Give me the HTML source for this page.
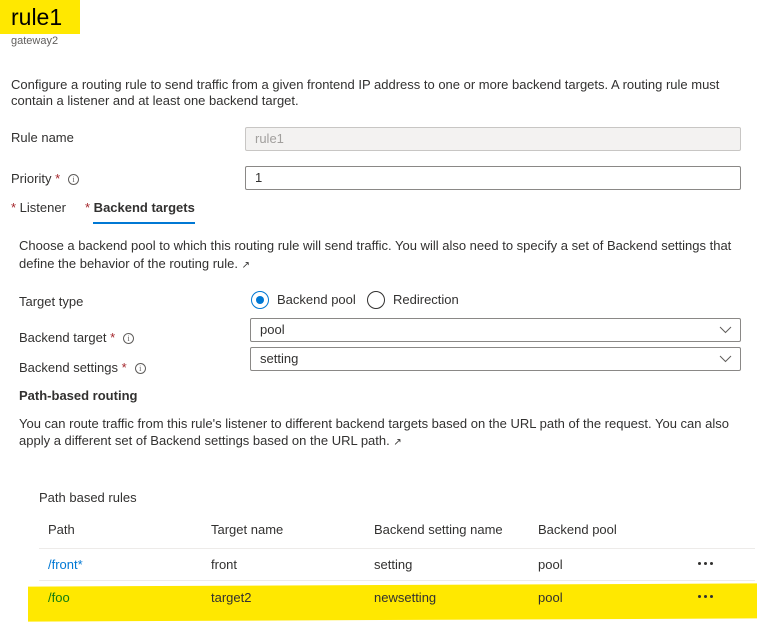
<!DOCTYPE html>
<html><head><meta charset="utf-8"><style>
*{margin:0;padding:0;box-sizing:border-box}
body{width:772px;height:629px;background:#fff;position:relative;overflow:hidden;font-family:"Liberation Sans",sans-serif;font-size:13px;color:#323130}
.t{position:absolute;white-space:nowrap;line-height:16px}
.req{color:#a4262c}
.info{display:inline-block;width:11px;height:11px;border:1px solid #605e5c;border-radius:50%;font-size:8px;line-height:9px;text-align:center;color:#605e5c;vertical-align:middle;margin-left:8px;font-family:"Liberation Serif",serif}
.box{position:absolute;border:1px solid #8a8886;border-radius:2px;height:24px;padding-left:9px;line-height:22px;font-size:13px}
.chev{position:absolute;right:8px;top:7px}
.hl{position:absolute;background:#ffe800}
.line{position:absolute;height:1px;background:#edebe9}
.ext{font-size:10px}
.dots{position:absolute;width:18px;height:4px}
.dots i{position:absolute;top:0;width:3px;height:3px;border-radius:50%;background:#323130}
</style></head><body>
<div class="hl" style="left:0;top:0;width:80px;height:34px"></div>
<div class="hl" style="left:28px;top:585px;width:729px;height:35px;transform:skewY(-0.25deg)"></div>
<div class="t" style="left:11px;top:3px;font-size:23px;line-height:28px;color:#000">rule1</div>
<div class="t" style="left:11px;top:33px;font-size:11px;color:#605e5c">gateway2</div>
<div class="t" style="left:11px;top:77px">Configure a routing rule to send traffic from a given frontend IP address to one or more backend targets. A routing rule must</div>
<div class="t" style="left:11px;top:93px">contain a listener and at least one backend target.</div>
<div class="t" style="left:11px;top:130px">Rule name</div>
<div class="box" style="left:245px;top:127px;width:496px;background:#f3f2f1;border-color:#c8c6c4;color:#a19f9d">rule1</div>
<div class="t" style="left:11px;top:171px">Priority <span class="req">*</span><span class="info">i</span></div>
<div class="box" style="left:245px;top:166px;width:496px">1</div>
<div class="t" style="left:11px;top:200px"><span class="req">*</span> Listener</div>
<div class="t" style="left:85px;top:200px;font-weight:bold"><span class="req" style="font-weight:normal">*</span> Backend targets</div>
<div style="position:absolute;left:93px;top:222px;width:102px;height:2px;background:#0078d4"></div>
<div class="t" style="left:19px;top:238px">Choose a backend pool to which this routing rule will send traffic. You will also need to specify a set of Backend settings that</div>
<div class="t" style="left:19px;top:256px">define the behavior of the routing rule. <span class="ext">&#x2197;</span></div>
<div class="t" style="left:19px;top:294px">Target type</div>
<div style="position:absolute;left:251px;top:291px;width:18px;height:18px;border:1px solid #0078d4;border-radius:50%"><div style="position:absolute;left:4px;top:4px;width:8px;height:8px;border-radius:50%;background:#0078d4"></div></div>
<div class="t" style="left:277px;top:292px">Backend pool</div>
<div style="position:absolute;left:367px;top:291px;width:18px;height:18px;border:1px solid #323130;border-radius:50%"></div>
<div class="t" style="left:393px;top:292px">Redirection</div>
<div class="t" style="left:19px;top:330px">Backend target <span class="req">*</span><span class="info">i</span></div>
<div class="box" style="left:250px;top:318px;width:491px">pool<svg class="chev" width="13" height="8" viewBox="0 0 13 8"><path d="M1 1l5.5 5.5L12 1" fill="none" stroke="#605e5c" stroke-width="1"/></svg></div>
<div class="t" style="left:19px;top:360px">Backend settings <span class="req">*</span><span class="info">i</span></div>
<div class="box" style="left:250px;top:347px;width:491px">setting<svg class="chev" width="13" height="8" viewBox="0 0 13 8"><path d="M1 1l5.5 5.5L12 1" fill="none" stroke="#605e5c" stroke-width="1"/></svg></div>
<div class="t" style="left:19px;top:388px;font-weight:bold;font-size:13px">Path-based routing</div>
<div class="t" style="left:19px;top:416px">You can route traffic from this rule's listener to different backend targets based on the URL path of the request. You can also</div>
<div class="t" style="left:19px;top:433px">apply a different set of Backend settings based on the URL path. <span class="ext">&#x2197;</span></div>
<div class="t" style="left:39px;top:490px">Path based rules</div>
<div class="t" style="left:48px;top:522px">Path</div>
<div class="t" style="left:211px;top:522px">Target name</div>
<div class="t" style="left:374px;top:522px">Backend setting name</div>
<div class="t" style="left:538px;top:522px">Backend pool</div>
<div class="line" style="left:39px;top:548px;width:716px"></div>
<div class="t" style="left:48px;top:557px;color:#0078d4">/front*</div>
<div class="t" style="left:211px;top:557px">front</div>
<div class="t" style="left:374px;top:557px">setting</div>
<div class="t" style="left:538px;top:557px">pool</div>
<div class="dots" style="left:698px;top:562px"><i style="left:0"></i><i style="left:6px"></i><i style="left:12px"></i></div>
<div class="line" style="left:39px;top:580px;width:716px"></div>
<div class="t" style="left:48px;top:590px;color:#107c10">/foo</div>
<div class="t" style="left:211px;top:590px">target2</div>
<div class="t" style="left:374px;top:590px">newsetting</div>
<div class="t" style="left:538px;top:590px">pool</div>
<div class="dots" style="left:698px;top:595px"><i style="left:0"></i><i style="left:6px"></i><i style="left:12px"></i></div>
</body></html>
